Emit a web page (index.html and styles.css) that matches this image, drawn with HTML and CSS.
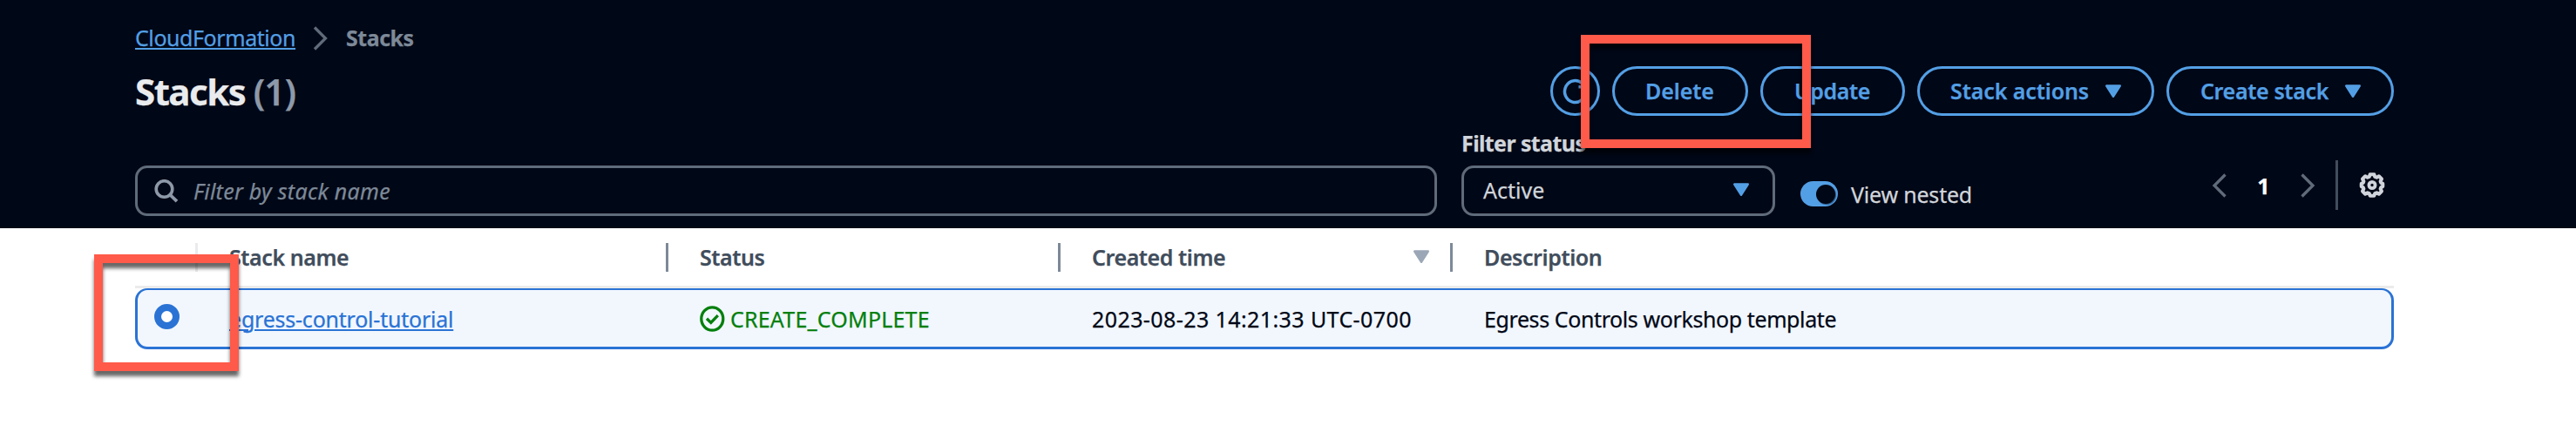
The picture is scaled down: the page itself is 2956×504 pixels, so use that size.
FILE: index.html
```html
<!DOCTYPE html>
<html lang="en">
<head>
<meta charset="utf-8">
<title>CloudFormation - Stacks</title>
<link rel="stylesheet" href="styles.css">
</head>
<body>
<header class="header">
  <nav class="crumbs">
    <a class="crumb-link" href="#">CloudFormation</a>
    <svg class="crumb-sep" width="18" height="28" viewBox="0 0 18 28"><path d="M2 1.500 14.500 14 2 26.500" fill="none" stroke="#5f6b7a" stroke-width="3.300"/></svg>
    <span class="crumb-current">Stacks</span>
  </nav>
  <div class="title-row">
    <h1 class="title">Stacks <span class="count">(1)</span></h1>
    <div class="actions">
      <button class="btn btn-icon" aria-label="Refresh">
        <svg width="29" height="30" viewBox="0 0 29 30"><path d="M26.500 15a12 12.500 0 1 1-3.600-8.900l2.600 3" fill="none" stroke="#539fe5" stroke-width="3.500"/><path d="M26.700 1v8.700h-8.200" fill="none" stroke="#539fe5" stroke-width="3.500"/></svg>
      </button>
      <button class="btn btn-delete">Delete</button>
      <button class="btn btn-update">Update</button>
      <button class="btn btn-stack">Stack actions<svg class="caret" width="20" height="16" viewBox="0 0 20 16"><path d="M2.200 1.500h15.600L10 13.800z" fill="currentColor" stroke="currentColor" stroke-width="2.400" stroke-linejoin="round"/></svg></button>
      <button class="btn btn-create">Create stack<svg class="caret" width="20" height="16" viewBox="0 0 20 16"><path d="M2.200 1.500h15.600L10 13.800z" fill="currentColor" stroke="currentColor" stroke-width="2.400" stroke-linejoin="round"/></svg></button>
    </div>
  </div>
  <div class="toolbar">
    <div class="search">
      <svg width="28" height="27" viewBox="0 0 28 27"><circle cx="11.500" cy="11" r="9.300" fill="none" stroke="#8d99a8" stroke-width="3.600"/><path d="M18 17.500 26 25.200" stroke="#8d99a8" stroke-width="3.800"/></svg>
      <span class="placeholder">Filter by stack name</span>
    </div>
    <div class="filter">
      <span class="filter-label">Filter status</span>
      <div class="select"><span>Active</span><svg width="20" height="16" viewBox="0 0 20 16"><path d="M2.200 1.500h15.600L10 13.800z" fill="#539fe5" stroke="#539fe5" stroke-width="2.400" stroke-linejoin="round"/></svg></div>
    </div>
    <div class="toggle"><span class="switch"></span><span class="toggle-text">View nested</span></div>
    <div class="pager">
      <svg width="18" height="28" viewBox="0 0 18 28"><path d="M15.500 1.500 3 14l12.500 12.500" fill="none" stroke="#5f6b7a" stroke-width="3.300"/></svg>
      <span class="page">1</span>
      <svg width="18" height="28" viewBox="0 0 18 28"><path d="M2.500 1.500 15 14 2.500 26.500" fill="none" stroke="#5f6b7a" stroke-width="3.300"/></svg>
      <span class="rule"></span>
      <svg class="gear" width="30" height="31" viewBox="-15 -15.500 30 31" fill="none" stroke="#d1d5db"><path stroke-width="4" stroke-linejoin="round" d="M-2.400-12.300h4.800l.8 2.700 2 .8 2.600-1.500 3.200 3.300-1.400 2.700.7 1.700 2 1v3.200l-2 1-.7 1.700 1.400 2.700-3.200 3.300-2.600-1.500-2 .8-.8 2.700h-4.800l-.8-2.700-2-.8-2.600 1.500-3.200-3.300 1.400-2.700-.7-1.700-2-1v-3.200l2-1 .7-1.700-1.400-2.700 3.200-3.300 2.600 1.500 2-.8z"/><circle r="3.600" stroke-width="3.800"/></svg>
    </div>
  </div>
</header>
<main class="table">
  <div class="thead">
    <div class="th th-select"></div>
    <div class="th">Stack name</div>
    <div class="th">Status</div>
    <div class="th th-sorted">Created time<svg width="20" height="16" viewBox="0 0 20 16"><path d="M2.200 1.500h15.600L10 13.800z" fill="#9ba7b6" stroke="#9ba7b6" stroke-width="2.400" stroke-linejoin="round"/></svg></div>
    <div class="th th-last">Description</div>
  </div>
  <div class="row">
    <div class="cell cell-select"><span class="radio"></span></div>
    <div class="cell"><a class="stack-link" href="#">egress-control-tutorial</a></div>
    <div class="cell cell-status"><svg width="29" height="30" viewBox="0 0 29 30" fill="none" stroke="#037f0c"><ellipse cx="14.300" cy="15" rx="12.500" ry="13.200" stroke-width="3.300"/><path d="M8 14.800l4.800 4.700 8-8.300" stroke-width="3.300"/></svg><span class="status-text">CREATE_COMPLETE</span></div>
    <div class="cell cell-date">2023-08-23 14:21:33 UTC-0700</div>
    <div class="cell cell-desc">Egress Controls workshop template</div>
  </div>
</main>
<div class="callout callout-delete"></div>
<div class="callout callout-radio"></div>
</body>
</html>
```
FILE: styles.css
```css
* { box-sizing: border-box; }
body {
  margin: 0;
  height: 504px;
  position: relative;
  overflow: hidden;
  background: #fff;
  color: #000716;
  font: 400 25px/36px "Noto Sans", "Open Sans", sans-serif;
  -webkit-text-stroke: 0.25px currentColor;
  white-space: nowrap;
}
svg { display: block; flex: none; }

.header {
  height: 262px;
  padding: 23px 209px 0 155px;
  background: #000716;
}
.crumbs { display: flex; align-items: center; height: 40px; }
.crumb-link {
  color: #539fe5;
  letter-spacing: -0.43px;
  text-decoration: underline 2px;
  text-underline-offset: 2px;
}
.crumb-sep { margin: 1px 20px 0 20px; }
.crumb-current { color: #7d8998; font-weight: 700; letter-spacing: -0.5px; }

.title-row { display: flex; justify-content: space-between; align-items: center; height: 57px; margin-top: 13px; }
.title { margin: 0; font-size: 42px; line-height: 57px; font-weight: 700; color: #e9ebed; letter-spacing: -1.5px; }
.count { font-weight: 600; color: #8d99a8; letter-spacing: -1px; }

.actions { display: flex; gap: 14px; }
.btn {
  display: flex;
  align-items: center;
  height: 57px;
  padding: 0 0 2px;
  border: 3px solid #539fe5;
  border-radius: 29px;
  background: none;
  color: #539fe5;
  font: 600 25px/36px "Noto Sans", "Open Sans", sans-serif;
  letter-spacing: -0.1px;
}
.btn-icon { width: 57px; padding: 0 0 0 11px; }
.btn-delete { width: 156px; padding-left: 35px; }
.btn-update { width: 166px; padding-left: 36px; letter-spacing: -0.4px; }
.btn-stack { width: 272px; padding-left: 35px; }
.btn-create { width: 261px; padding-left: 36px; letter-spacing: -0.35px; }
.caret { margin: 2px 0 0 18px; }

.toolbar { display: flex; align-items: flex-end; height: 115px; }
.search {
  display: flex;
  align-items: center;
  width: 1494px;
  height: 58px;
  margin-right: 28px;
  padding-left: 19px;
  border: 3px solid #5f6b7a;
  border-radius: 14px;
}
.placeholder { margin-left: 17px; font-style: italic; color: #7d8998; letter-spacing: 0.26px; }
.filter { display: flex; flex-direction: column; gap: 8px; width: 360px; }
.filter-label { line-height: 35px; font-weight: 700; letter-spacing: -0.6px; color: #d1d5db; }
.select {
  display: flex;
  justify-content: space-between;
  align-items: center;
  height: 58px;
  padding: 0 26px 2px 22px;
  border: 3px solid #5f6b7a;
  border-radius: 14px;
  color: #d1d5db;
}
.toggle { display: flex; align-items: center; height: 51px; margin-left: 29px; color: #d1d5db; }
.switch {
  display: flex;
  align-items: center;
  justify-content: flex-end;
  width: 43px;
  height: 29px;
  padding-right: 3px;
  border-radius: 15px;
  background: #539fe5;
}
.switch::after {
  content: "";
  width: 22px;
  height: 22px;
  border-radius: 50%;
  background: #000716;
  box-shadow: 1px 1px 1px rgba(0, 7, 22, 0.5);
}
.toggle-text { margin-left: 15px; letter-spacing: -0.2px; }
.pager { display: flex; align-items: center; height: 57px; margin: 0 10px 7px auto; }
.page { width: 83px; text-align: center; font-weight: 700; color: #fff; }
.rule { width: 3px; height: 57px; margin: 0 24px 0 23px; background: #414d5c; }

.table { padding: 0 209px 0 155px; }
.thead, .row { display: grid; grid-template-columns: 72px 540px 450px 450px 1fr; }
.thead { height: 69px; padding: 17px 0 16px; border-bottom: 3px solid #ebebeb; }
.th {
  display: flex;
  align-items: center;
  height: 33px;
  padding: 0 0 2px 36px;
  border-right: 3px solid #7d8998;
  color: #414d5c;
  font-weight: 600;
  letter-spacing: -0.42px;
}
.th-select { border-color: #e9ebed; }
.th-sorted { justify-content: space-between; padding-right: 23px; }
.th-last { border: 0; }
.row {
  height: 70px;
  border: 3px solid #2a73d5;
  border-top-width: 2px;
  border-radius: 14px;
  background: #f2f7fe;
  grid-template-columns: 69px 540px 450px 450px 1fr;
}
.cell { display: flex; align-items: center; padding-left: 36px; }
.cell-select { padding: 0 0 5px 19px; }
.radio { width: 29px; height: 29px; border: 8.5px solid #2a73d5; border-radius: 50%; background: #fff; }
.stack-link {
  color: #2a73d5;
  letter-spacing: -0.22px;
  text-decoration: underline 2px;
  text-underline-offset: 2px;
}
.cell-status { color: #037f0c; }
.status-text { margin-left: 6px; letter-spacing: 0.2px; }
.cell-date { letter-spacing: 0.41px; }
.cell-desc { letter-spacing: -0.4px; }

/* Highlight frames drawn over the console */
.callout { position: absolute; border: 10px solid #ff5a4a; filter: drop-shadow(0 6px 2px rgba(0, 0, 0, 0.6)); }
.callout-delete { left: 1814px; top: 40px; width: 264px; height: 130px; }
.callout-radio { left: 108px; top: 292px; width: 166px; height: 134px; }
```
